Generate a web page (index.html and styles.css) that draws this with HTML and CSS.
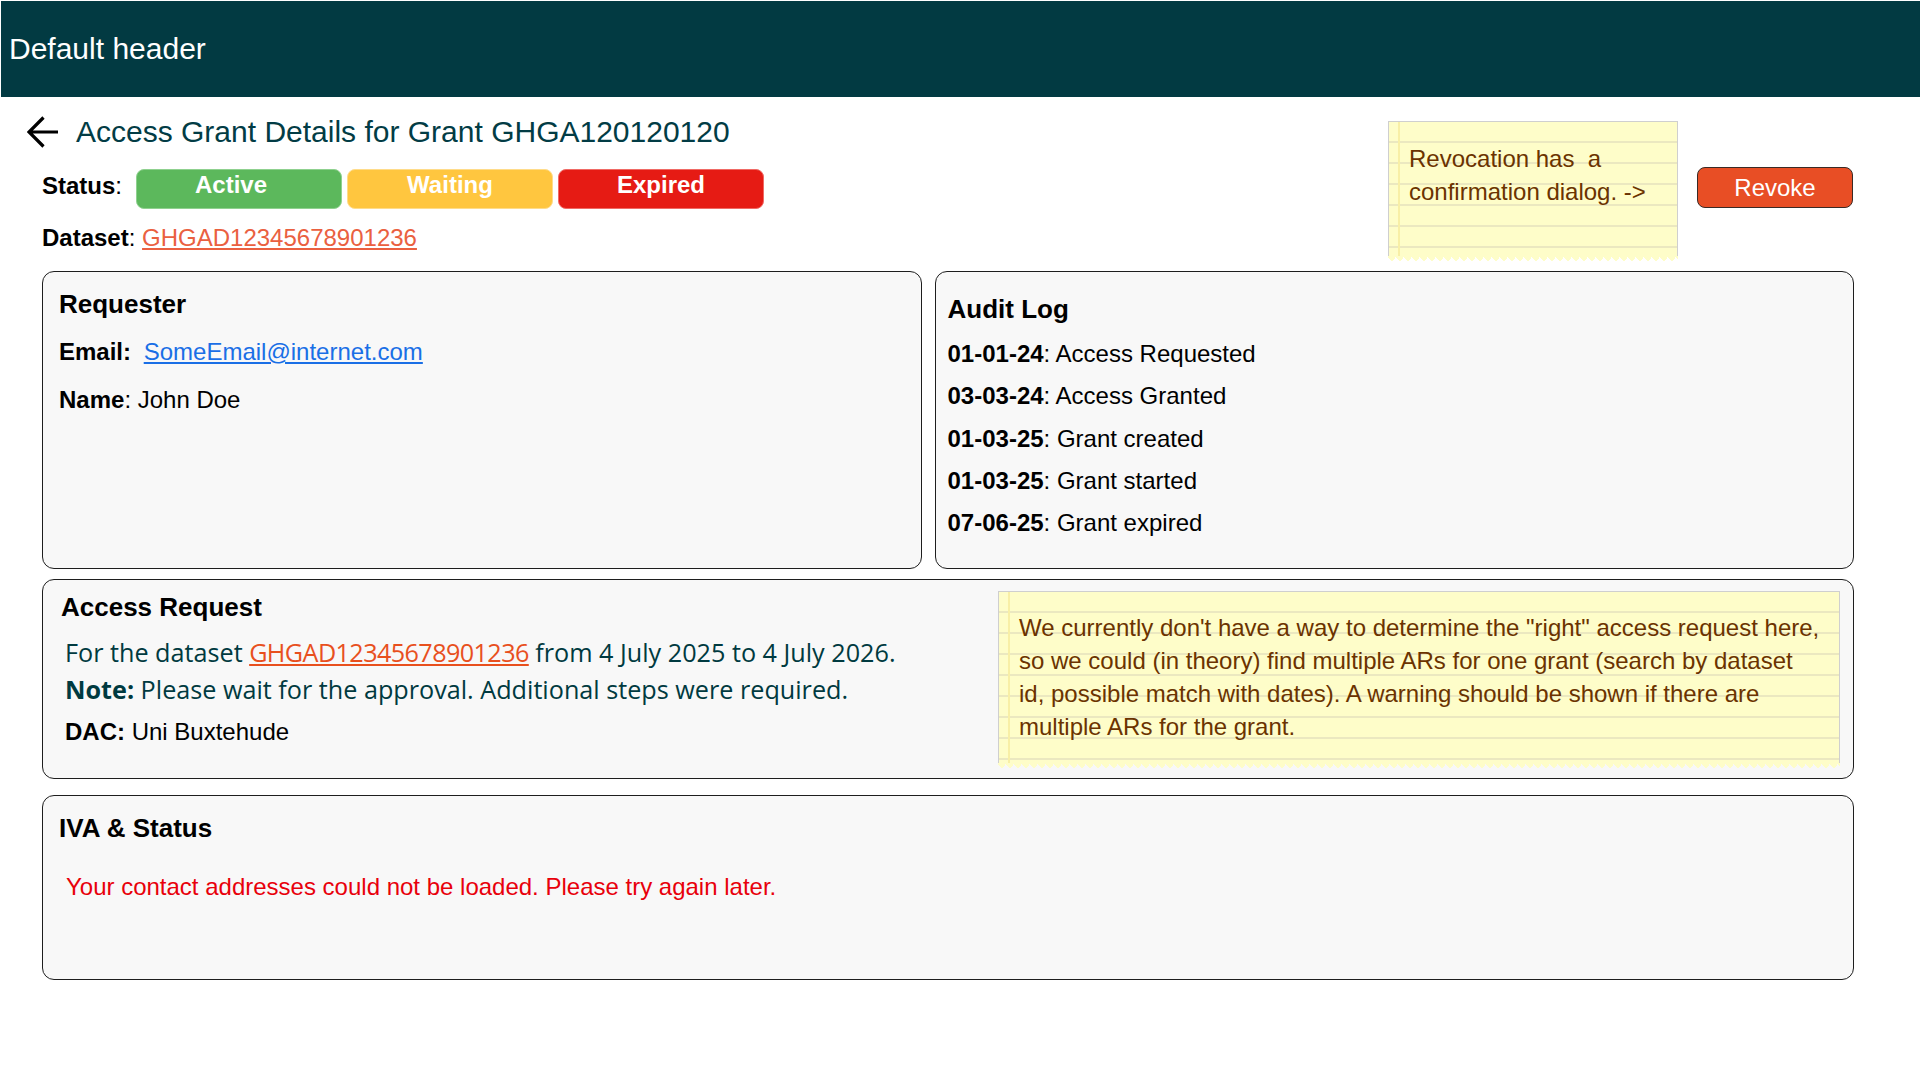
FILE: index.html
```html
<!DOCTYPE html>
<html lang="en">
<head>
<meta charset="utf-8">
<title>Access Grant Details</title>
<link rel="stylesheet" href="styles.css">
</head>
<body>
<header class="app-header">Default header</header>
<main class="page">
  <section class="top">
    <div class="top-left">
      <h1 class="title">
        <svg class="back" width="32" height="32" viewBox="0 0 32 32" aria-hidden="true">
          <path d="M31 16H2M16.5 1.5L2 16l14.5 14.5" fill="none" stroke="#000" stroke-width="3.2"/>
        </svg>
        <span>Access Grant Details for Grant GHGA120120120</span>
      </h1>
      <div class="status-row">
        <span class="label"><b>Status</b>:</span>
        <span class="badge active">Active</span>
        <span class="badge waiting">Waiting</span>
        <span class="badge expired">Expired</span>
      </div>
      <div class="dataset-row"><b>Dataset</b>: <a class="ds-link" href="#">GHGAD12345678901236</a></div>
    </div>
    <div class="top-right">
      <div class="sticky sticky-small">Revocation has&nbsp; a confirmation dialog. -&gt;</div>
      <button class="revoke" type="button">Revoke</button>
    </div>
  </section>

  <div class="cards-row">
    <section class="card requester">
      <h3 class="card-title">Requester</h3>
      <p class="line email"><b>Email:</b> <a class="mail" href="#">SomeEmail@internet.com</a></p>
      <p class="line name"><b>Name</b>: John Doe</p>
    </section>
    <section class="card audit">
      <h3 class="card-title">Audit Log</h3>
      <ul class="log">
        <li><b>01-01-24</b>: Access Requested</li>
        <li><b>03-03-24</b>: Access Granted</li>
        <li><b>01-03-25</b>: Grant created</li>
        <li><b>01-03-25</b>: Grant started</li>
        <li><b>07-06-25</b>: Grant expired</li>
      </ul>
    </section>
  </div>

  <section class="card access">
    <div class="access-main">
      <h3 class="card-title">Access Request</h3>
      <p class="ar-line first">For the dataset <a class="ar-link" href="#">GHGAD12345678901236</a> from 4 July 2025 to 4 July 2026.</p>
      <p class="ar-line"><b>Note:</b> Please wait for the approval. Additional steps were required.</p>
      <p class="line dac"><b>DAC:</b> Uni Buxtehude</p>
    </div>
    <div class="sticky sticky-wide">We currently don't have a way to determine the "right" access request here, so we could (in theory) find multiple ARs for one grant (search by dataset id, possible match with dates). A warning should be shown if there are multiple ARs for the grant.</div>
  </section>

  <section class="card iva">
    <h3 class="card-title">IVA &amp; Status</h3>
    <p class="error">Your contact addresses could not be loaded. Please try again later.</p>
  </section>
</main>
</body>
</html>
```

FILE: styles.css
```css
html, body {
  margin: 0;
  padding: 0;
  background: #ffffff;
}

body {
  font-family: "Liberation Sans", Arial, sans-serif;
  font-size: 24px;
  color: #000;
}

.app-header {
  margin: 1px 0 0 1px;
  height: 96px;
  background: #023a42;
  color: #ffffff;
  font-size: 30px;
  line-height: 96px;
  padding-left: 8px;
}

.page {
  padding: 0 66px 40px 42px;
}

.top {
  display: flex;
  justify-content: space-between;
  align-items: flex-start;
}

.title {
  margin: 17px 0 0 -15px;
  display: flex;
  align-items: center;
  gap: 17px;
  font-size: 30px;
  line-height: 36px;
  font-weight: normal;
  color: #023c45;
}

.back {
  display: block;
  flex: none;
}

.status-row {
  margin-top: 19px;
  display: flex;
  align-items: center;
  gap: 5px;
  height: 39px;
}

.status-row .label {
  width: 89px;
  padding-bottom: 6px;
}

.badge {
  width: 206px;
  height: 40px;
  box-sizing: border-box;
  border-radius: 8px;
  color: #fff;
  font-weight: bold;
  text-align: center;
  line-height: 30px;
  padding-bottom: 10px;
}

.badge.active { background: #5cb85c; border: 1px solid #8fd18f; padding-right: 16px; }
.badge.waiting { background: #ffc63f; border: 1px solid #ffdc8a; }
.badge.expired { background: #e61b14; border: 1px solid #f06a65; }

.dataset-row {
  margin-top: 14px;
  line-height: 32px;
}

.ds-link {
  color: #ea6040;
  text-decoration: underline;
}

.top-right {
  display: flex;
  align-items: center;
  gap: 19px;
  margin-top: 24px;
  margin-right: 1px;
}

.sticky {
  position: relative;
  box-sizing: border-box;
  color: #6b3300;
  line-height: 33px;
  background-color: #fefdc9;
  background-image:
    linear-gradient(90deg, transparent 9px, #f8efa6 9px, #f8efa6 11px, transparent 11px),
    repeating-linear-gradient(180deg, transparent 0, transparent 19px, #ebe8c0 19px, #ebe8c0 21px);
  border: 1px solid #cfcfcf;
  border-bottom: none;
}

.sticky::after {
  content: "";
  position: absolute;
  left: -1px;
  right: -1px;
  bottom: -5px;
  height: 5px;
  background: conic-gradient(from -45deg at 50% 100%, #fefdc9 90deg, transparent 0) 0 0 / 8px 5px repeat-x;
}

.sticky-small {
  width: 290px;
  height: 135px;
  padding: 20px 12px 0 20px;
}

.revoke {
  width: 156px;
  height: 41px;
  box-sizing: border-box;
  background: #e84e25;
  color: #fff;
  border: 1px solid #3a2a25;
  border-radius: 8px;
  font-family: "Liberation Sans", Arial, sans-serif;
  font-size: 24px;
  padding: 0;
  margin-bottom: 2px;
}

.cards-row {
  margin-top: 15px;
  display: grid;
  grid-template-columns: 880fr 920fr;
  gap: 13px;
}

.card {
  box-sizing: border-box;
  background: #f8f8f8;
  border: 1px solid #1e1e1e;
  border-radius: 12px;
}

.card-title {
  margin: 0;
  font-size: 26px;
  line-height: 32px;
  font-weight: bold;
}

.line {
  margin: 0;
  line-height: 32px;
}

.requester {
  height: 298px;
  padding: 16px 16px;
}

.requester .email { margin-top: 16px; }
.requester .name { margin-top: 16px; }

.mail {
  color: #1a6fe6;
  margin-left: 6px;
}

.audit {
  height: 298px;
  padding: 21px 12px;
}

.log {
  list-style: none;
  margin: 13px 0 0;
  padding: 0;
  display: flex;
  flex-direction: column;
  gap: 10.3px;
}

.log li {
  line-height: 32px;
}

.access {
  margin-top: 10px;
  height: 200px;
  display: flex;
  align-items: flex-start;
  padding: 11px 13px 0 18px;
}

.access-main {
  flex: 1;
}

.ar-line {
  margin: 5px 0 0 4px;
  font-family: "Open Sans", Lato, sans-serif;
  font-size: 25.2px;
  line-height: 32px;
  color: #003a40;
}

.ar-line b {
  font-weight: 700;
}

.ar-line.first {
  margin-top: 13px;
}

.ar-link {
  color: #e8501e;
  letter-spacing: -0.6px;
}

.dac {
  margin: 11px 0 0 4px;
}

.sticky-wide {
  width: 842px;
  height: 172px;
  padding: 19px 16px 0 20px;
  flex: none;
}

.iva {
  margin-top: 16px;
  height: 185px;
  padding: 16px 16px;
}

.error {
  margin: 27px 0 0 7px;
  line-height: 32px;
  color: #e8000b;
}
```
